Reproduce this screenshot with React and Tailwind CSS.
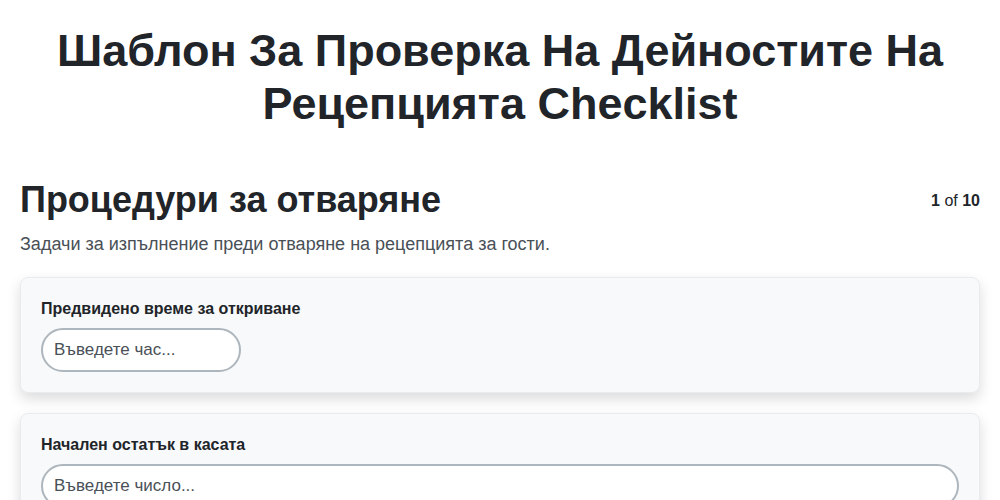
import React from 'react';

const fields = [
  { label: 'Предвидено време за откриване', placeholder: 'Въведете час...', narrow: true },
  { label: 'Начален остатък в касата', placeholder: 'Въведете число...', narrow: false },
];

export default function App() {
  return (
    <div className="min-h-screen bg-white px-5 text-[#212529]" style={{ fontFamily: '"Liberation Sans", Arial, sans-serif' }}>
      <h1 className="pt-[24px] text-center text-[45px] font-bold leading-[53px]">
        Шаблон За Проверка На Дейностите На Рецепцията Checklist
      </h1>

      <div className="mt-[48px] flex items-start justify-between">
        <h2 className="text-[36px] font-bold leading-[43px]">Процедури за отваряне</h2>
        <div className="mt-[11px] text-base leading-6">
          <span className="font-bold">1</span> of <span className="font-bold">10</span>
        </div>
      </div>
      <p className="mt-[10px] text-[18px] leading-[27px] text-[#495057]">
        Задачи за изпълнение преди отваряне на рецепцията за гости.
      </p>

      <div className="mt-[19px] flex flex-col gap-[20px] pb-10">
        {fields.map(f => (
          <div key={f.label} className="rounded-lg border border-[#e9ecef] bg-[#f8f9fa] px-5 pt-[21px] pb-5 shadow-[0_6px_14px_rgba(0,0,0,0.14)]">
            <label className="block text-base font-bold leading-5">{f.label}</label>
            <input
              placeholder={f.placeholder}
              className={`mt-[9px] block h-[44px] rounded-full border-2 border-[#adb5bd] bg-white px-[11px] text-[17px] placeholder:text-[#495057] focus:outline-none ${f.narrow ? 'w-[200px]' : 'w-full'}`}
            />
          </div>
        ))}
      </div>
    </div>
  );
}
